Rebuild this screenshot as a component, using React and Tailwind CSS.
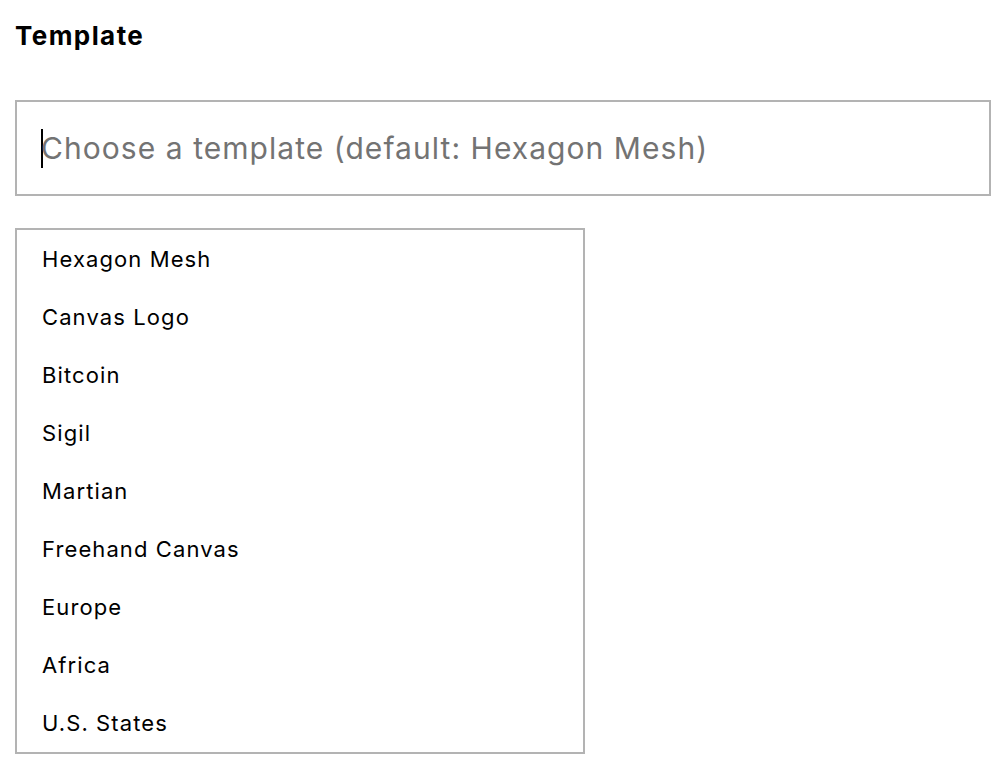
const templates = [
  "Hexagon Mesh",
  "Canvas Logo",
  "Bitcoin",
  "Sigil",
  "Martian",
  "Freehand Canvas",
  "Europe",
  "Africa",
  "U.S. States",
];

export default function App() {
  return (
    <div className="min-h-screen bg-white px-[15px] pt-[20px] font-['Inter',sans-serif] text-black">
      <h2 className="text-[26px] font-bold leading-[32px] tracking-[0.055em]">Template</h2>

      <div className="mt-[48px] flex h-[96px] w-[976px] items-center border-2 border-[#b3b3b3] pl-[24px] pr-[24px]">
        <span className="h-[39px] w-[2px] shrink-0 bg-black" />
        <input
          className="-ml-[2px] w-full bg-transparent text-[30px] tracking-[0.035em] text-black outline-none placeholder:text-[#737373]"
          placeholder="Choose a template (default: Hexagon Mesh)"
        />
      </div>

      <ul className="mt-[32px] w-[570px] border-2 border-[#b3b3b3]">
        {templates.map((t) => (
          <li key={t} className="flex h-[58px] items-center px-[25px] text-[22px] tracking-[0.05em]">
            {t}
          </li>
        ))}
      </ul>
    </div>
  );
}
